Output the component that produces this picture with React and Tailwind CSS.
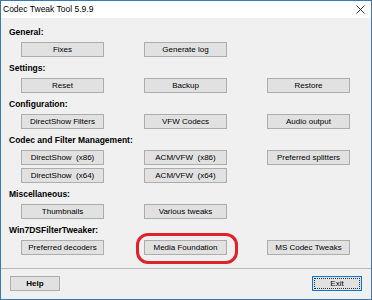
import React from 'react';

const ROWS = [
  { title: 'General:', rows: [['Fixes', 'Generate log', null]] },
  { title: 'Settings:', rows: [['Reset', 'Backup', 'Restore']] },
  { title: 'Configuration:', rows: [['DirectShow Filters', 'VFW Codecs', 'Audio output']] },
  {
    title: 'Codec and Filter Management:',
    rows: [
      ['DirectShow  (x86)', 'ACM/VFW  (x86)', 'Preferred splitters'],
      ['DirectShow  (x64)', 'ACM/VFW  (x64)', null],
    ],
  },
  { title: 'Miscellaneous:', rows: [['Thumbnails', 'Various tweaks', null]] },
  { title: 'Win7DSFilterTweaker:', rows: [['Preferred decoders', 'Media Foundation', 'MS Codec Tweaks']] },
];

function Btn({ label }) {
  const marked = label === 'Media Foundation';
  return (
    <div className="relative w-[83px] h-[15px]">
      <button className="w-full h-full bg-[#e1e1e1] border border-[#adadad] text-[8px] leading-none whitespace-pre flex items-center justify-center text-black">
        {label}
      </button>
      {marked && (
        <div className="absolute -left-[8px] -right-[11px] -top-[7px] -bottom-[9px] border-[3px] border-[#e0222b] rounded-[12px] pointer-events-none" />
      )}
    </div>
  );
}

export default function App() {
  return (
    <div className="w-[372px] h-[300px] border border-[#3a78b0] bg-[#f0f0f0] flex flex-col overflow-hidden font-['Liberation_Sans',Arial,sans-serif] text-black">
      <div className="h-[17px] bg-white flex items-center justify-between pl-[2px] pr-[6px] shrink-0">
        <span className="text-[8.5px] leading-none">Codec Tweak Tool 5.9.9</span>
        <svg width="9" height="9" viewBox="0 0 9 9">
          <path d="M0.5 0.5 L8.5 8.5 M8.5 0.5 L0.5 8.5" stroke="#222" strokeWidth="0.9" fill="none" />
        </svg>
      </div>

      <div className="pt-[8px] pl-[8px] flex flex-col gap-[5px]">
        {ROWS.map((sec) => (
          <div key={sec.title} className="flex flex-col">
            <div className="h-[12px] leading-[12px] text-[8.5px] font-bold mb-[4px]">{sec.title}</div>
            <div className="flex flex-col gap-[3px] pl-[12px]">
              {sec.rows.map((row, i) => (
                <div key={i} className="flex gap-[40px]">
                  {row.map((b, j) => (b ? <Btn key={j} label={b} /> : <div key={j} className="w-[83px]" />))}
                </div>
              ))}
            </div>
          </div>
        ))}
      </div>

      <div className="mt-[13px] border-t border-[#b9b9b9]" />

      <div className="flex justify-between pt-[7px] pl-[9px] pr-[9px]">
        <button className="w-[50px] h-[15px] bg-[#e1e1e1] border border-[#adadad] text-[8px] font-bold leading-none flex items-center justify-center">
          Help
        </button>
        <button className="w-[50px] h-[15px] bg-[#e1e1e1] border border-[#0078d7] p-[1px] flex">
          <span className="flex-1 border border-dotted border-[#333] text-[8px] leading-none flex items-center justify-center">
            Exit
          </span>
        </button>
      </div>
    </div>
  );
}
